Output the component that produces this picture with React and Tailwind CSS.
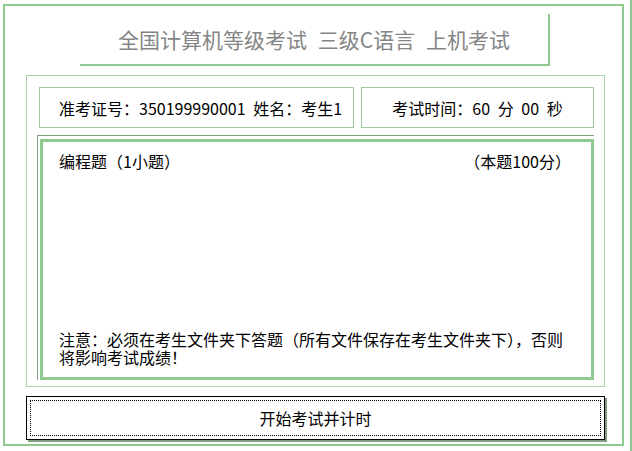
import React from 'react';

const App = () => {
  return (
    <div className="w-[632px] h-[451px] bg-white border-r-2 border-[#8fc98f] pl-[3px] pt-[4px] font-['Noto_Sans_CJK_SC','Liberation_Sans',sans-serif] text-black">
      <div className="w-[621px] h-[442px] border-2 border-[#8fc98f] flex flex-col">
        {/* 标题 */}
        <div className="ml-[75px] mt-[8px] w-[470px] h-[52px] border-r-2 border-b-2 border-[#8fc98f] flex items-center justify-center">
          <span className="text-[21px] leading-none text-[#858585] [word-spacing:6px] whitespace-pre">
            全国计算机等级考试 三级C语言 上机考试
          </span>
        </div>

        {/* 考生信息与题目 */}
        <div className="ml-[21px] mt-[9px] w-[579px] h-[312px] border border-[#a9d4a9] flex flex-col">
          <div className="flex mt-[11px] ml-[12px] gap-[7px]">
            <div className="w-[315px] h-[41px] border border-[#9ccc9c] flex items-center pl-[19px] text-[16px] whitespace-pre [word-spacing:4px]">
              准考证号：350199990001 姓名：考生1
            </div>
            <div className="w-[233px] h-[41px] border border-[#9ccc9c] flex items-center justify-center text-[16px] whitespace-pre [word-spacing:4px]">
              考试时间：60 分 00 秒
            </div>
          </div>

          <div className="ml-[10px] mt-[7px] w-[557px] h-[245px] border-l border-t border-[#7f9f7f] pl-[2px] pt-[3px]">
            <div className="w-full h-full border-[3px] border-[#8fc98f] flex flex-col justify-between pl-[16px] pr-[20px] pt-[10px] pb-[11px] text-[16px]">
              <div className="flex justify-between leading-[18px]">
                <span>编程题（1小题）</span>
                <span>（本题100分）</span>
              </div>
              <div className="leading-[18px] whitespace-nowrap">
                <div>注意：必须在考生文件夹下答题（所有文件保存在考生文件夹下），否则</div>
                <div>将影响考试成绩！</div>
              </div>
            </div>
          </div>
        </div>

        {/* 开始按钮 */}
        <button className="ml-[21px] mt-[9px] w-[579px] h-[44px] border border-black bg-white shadow-[2px_2px_0_#7f9f7f] p-[3px] text-[16px]">
          <div className="w-full h-full border border-dotted border-black flex items-center justify-center">
            开始考试并计时
          </div>
        </button>
      </div>
    </div>
  );
};

export default App;
